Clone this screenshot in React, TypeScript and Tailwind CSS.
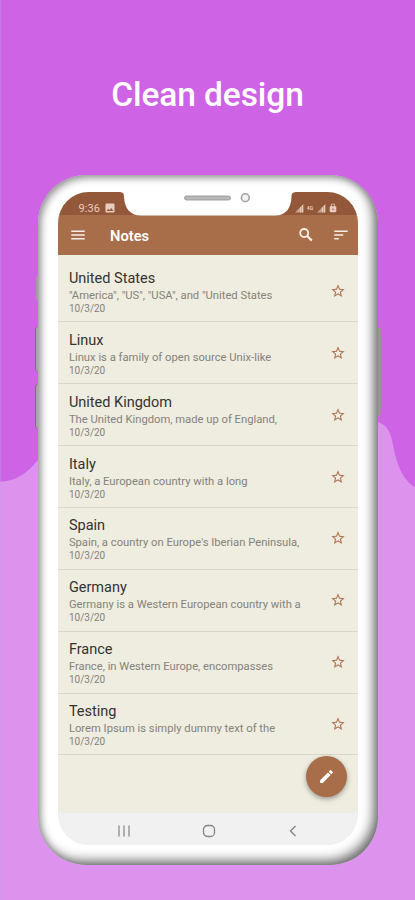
import { MdImage, MdLock, MdMenu, MdSort, MdStarBorder, MdEdit } from 'react-icons/md';

interface Note {
  title: string;
  text: string;
  date: string;
}

const notes: Note[] = [
  { title: 'United States', text: '"America", "US", "USA", and "United States', date: '10/3/20' },
  { title: 'Linux', text: 'Linux is a family of open source Unix-like', date: '10/3/20' },
  { title: 'United Kingdom', text: 'The United Kingdom, made up of England,', date: '10/3/20' },
  { title: 'Italy', text: 'Italy, a European country with a long', date: '10/3/20' },
  { title: 'Spain', text: "Spain, a country on Europe's Iberian Peninsula,", date: '10/3/20' },
  { title: 'Germany', text: 'Germany is a Western European country with a', date: '10/3/20' },
  { title: 'France', text: 'France, in Western Europe, encompasses', date: '10/3/20' },
  { title: 'Testing', text: 'Lorem Ipsum is simply dummy text of the', date: '10/3/20' },
];

function Wave() {
  return (
    <svg className="absolute inset-0" width="415" height="900" viewBox="0 0 415 900" fill="none">
      <path
        d="M0 481.500C14 482 27 474 38 460C80 400 330 390 378 422C388 425 391 434 393 445C397 467 404 481 415 487V900H0Z"
        fill="#DD93EE"
      />
      <path d="M0.500 0V481" stroke="#C37BE6" />
      <path d="M0.500 482V900" stroke="#CF9AEC" />
    </svg>
  );
}

function SearchIcon() {
  return (
    <svg width="18" height="18" viewBox="0 0 18 18" fill="none" stroke="currentColor">
      <circle cx="7.200" cy="7" r="4" strokeWidth="1.800" />
      <path d="M10.200 10L14.800 14.600" strokeWidth="2.200" />
    </svg>
  );
}

function Signal() {
  return (
    <svg width="9" height="9" viewBox="0 0 9 9">
      <path d="M0 8.500L8.500 0V8.500Z" fill="#D9BBA8" fillOpacity="0.75" />
      <path d="M5.500 3V8.500M7.500 1V8.500" stroke="#F0DDD0" strokeWidth="0.700" />
    </svg>
  );
}

function Notch() {
  return (
    <div className="absolute left-[62px] top-0 w-[176px] h-[24px]">
      <svg width="176" height="24" viewBox="0 0 176 24">
        <path
          d="M0 0C3 0.300 4 1.500 4 5C4.500 16 10 23.500 21 23.500H155C166 23.500 171 16 171.500 5C171.500 1.500 172.500 0.300 176 0Z"
          fill="#FFFFFF"
        />
        <rect x="64.500" y="4" width="46" height="4" rx="2" fill="#B9B9B9" stroke="#8F8F8F" strokeWidth="0.800" />
        <circle cx="125.300" cy="5.700" r="3.900" fill="#F1F1F1" stroke="#A3A3A3" strokeWidth="1.600" />
      </svg>
    </div>
  );
}

function StatusBar() {
  return (
    <div className="h-[23px] shrink-0 bg-[#935839] flex items-center justify-between pl-[21px] pr-[20px] pt-[9px] text-[#E8CDBE]">
      <div className="flex items-center gap-[4px]">
        <span className="text-[11px] leading-none tracking-[0.1px]">9:36</span>
        <MdImage className="size-[12px]" />
      </div>
      <div className="flex items-center">
        <Signal />
        <span className="w-[13px] text-center text-[5px] leading-none font-bold">4G</span>
        <Signal />
        <MdLock className="ml-[2px] size-[10px]" />
      </div>
    </div>
  );
}

function AppBar() {
  return (
    <div className="h-[40px] shrink-0 bg-[#A86D49] flex items-center pl-[11px] pr-[8px] text-[#F8EEE8]">
      <MdMenu className="size-[18px]" />
      <h2 className="ml-[23.500px] mr-auto text-[14.700px] leading-none font-semibold text-white pt-[2px]">Notes</h2>
      <SearchIcon />
      <MdSort className="ml-[17px] size-[18px]" />
    </div>
  );
}

function NoteRow({ note }: { note: Note }) {
  return (
    <div className="h-[61.850px] shrink-0 flex items-center border-b border-[#DAD8CC] pl-[11.400px] pr-[12px]">
      <div className="flex-1 whitespace-nowrap pt-[2px]">
        <div className="text-[14.500px] leading-[19px] text-[#34332F]">{note.title}</div>
        <div className="text-[11.230px] leading-[15px] text-[#85837B]">{note.text}</div>
        <div className="text-[10px] leading-[12px] text-[#85837B]">{note.date}</div>
      </div>
      <MdStarBorder className="size-[16px] text-[#B07350]" />
    </div>
  );
}

function NavBar() {
  return (
    <div className="h-[32px] shrink-0 bg-[#F1F1F1] flex items-center pt-[4px]">
      <svg className="ml-[60px]" width="12" height="12" viewBox="0 0 12 12" stroke="#8C8C8C" strokeWidth="1.300">
        <path d="M1 0.500V11.500M6 0.500V11.500M11 0.500V11.500" />
      </svg>
      <svg className="ml-[72px]" width="14" height="14" viewBox="0 0 14 14" fill="none" stroke="#858585" strokeWidth="1.300">
        <rect x="1.500" y="1.500" width="11" height="11" rx="4" />
      </svg>
      <svg className="ml-[73px]" width="8" height="12" viewBox="0 0 8 12" fill="none" stroke="#858585" strokeWidth="1.400">
        <path d="M6.500 1L1.500 6L6.500 11" />
      </svg>
    </div>
  );
}

export default function App() {
  return (
    <div className="relative w-[415px] h-[900px] overflow-hidden bg-[#CE63E6] font-['Roboto',sans-serif] flex flex-col items-center">
      <Wave />
      <h1 className="relative mt-[74px] h-[101px] text-[33.500px] leading-[42px] font-medium tracking-[-0.100px] text-white whitespace-nowrap">
        Clean design
      </h1>

      <div className="relative w-[340px] h-[690px] shrink-0">
        {/* side buttons */}
        <div className="absolute -left-[2px] top-[100px] w-[4px] h-[27px] rounded-l-sm bg-[#A39CA5]" />
        <div className="absolute -left-[3px] top-[151px] w-[5px] h-[46px] rounded-l-sm bg-[#A5A5A5] border-l border-[#7E6E80]" />
        <div className="absolute -left-[3px] top-[209px] w-[5px] h-[45px] rounded-l-sm bg-[#A5A5A5] border-l border-[#7E6E80]" />
        <div className="absolute -right-[3px] top-[152px] w-[6px] h-[89px] rounded-r-sm bg-[#969391]" />

        <div className="relative h-full rounded-[48px] bg-white px-[20px] pt-[17px] shadow-[inset_-5px_-5px_12px_-1px_#666666,inset_3px_3px_9px_-1px_#8c8c8c]">
          <div className="relative w-[300px] h-[653px] rounded-[31px] overflow-hidden bg-[#EFECE0] flex flex-col">
            <StatusBar />
            <AppBar />
            <div className="flex-1 flex flex-col pt-[5.600px]">
              {notes.map((note) => (
                <NoteRow key={note.title} note={note} />
              ))}
            </div>
            <NavBar />
            <Notch />
            <button className="absolute right-[11px] bottom-[48px] size-[41px] rounded-full bg-[#A86D49] flex items-center justify-center shadow-[0_2px_5px_rgba(0,0,0,0.35)]">
              <MdEdit className="size-[17px] text-white" />
            </button>
          </div>
        </div>
      </div>
    </div>
  );
}
